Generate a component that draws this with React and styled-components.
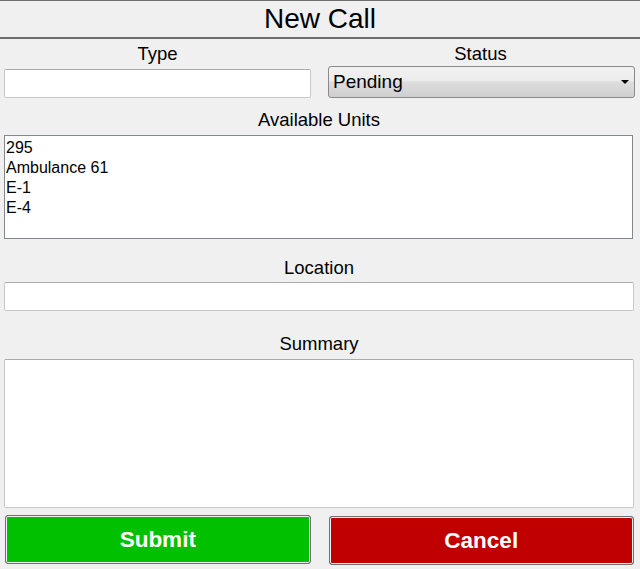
import React, { useState } from 'react';
import styled, { createGlobalStyle } from 'styled-components';

const GlobalStyle = createGlobalStyle`
  html, body {
    margin: 0;
    padding: 0;
    background: #f0f0f0;
    font-family: "Liberation Sans", Arial, sans-serif;
    color: #000;
  }
`;

const Window = styled.div`
  width: 640px;
  height: 569px;
  background: #f0f0f0;
  display: flex;
  flex-direction: column;
  overflow: hidden;
`;

const Header = styled.div`
  flex-shrink: 0;
  height: 36px;
  border-top: 1px solid #6d6d6d;
  border-bottom: 2px solid #6d6d6d;
  display: flex;
  align-items: center;
  justify-content: center;
  font-size: 28px;
`;

const Body = styled.div`
  flex-shrink: 0;
  display: flex;
  flex-direction: column;
  padding: 0 6px 0 4px;
`;

const Row = styled.div`
  display: flex;
  gap: 16px;
  align-items: flex-end;
`;

const Field = styled.div`
  flex: 1;
  flex-shrink: 0;
  display: flex;
  flex-direction: column;
  margin-top: ${(p) => p.top || 0}px;
`;

const Label = styled.div`
  text-align: center;
  font-size: 18.5px;
  line-height: 20px;
  margin-bottom: ${(p) => p.gap || 5}px;
`;

const TextInput = styled.input`
  box-sizing: border-box;
  height: 29px;
  border: 1px solid #c8c8c8;
  border-top-color: #ababab;
  border-radius: 2px;
  background: #fff;
  font: 16px "Liberation Sans", Arial, sans-serif;
  padding: 0 4px;
  outline: none;
`;

const SelectBox = styled.div`
  box-sizing: border-box;
  height: 32px;
  border: 1px solid #8a8a8a;
  border-radius: 3px;
  background: linear-gradient(#f2f2f2 0%, #ebebeb 45%, #dddddd 50%, #cfcfcf 100%);
  display: flex;
  align-items: center;
  justify-content: space-between;
  padding: 0 4px 0 4px;
  font-size: 19px;
  margin-left: 1px;
  margin-right: -1px;
`;

const Caret = styled.span`
  width: 0;
  height: 0;
  border-left: 4px solid transparent;
  border-right: 4px solid transparent;
  border-top: 4px solid #000;
  margin-right: 1px;
`;

const ListBox = styled.div`
  box-sizing: border-box;
  height: 104px;
  border: 1px solid #828790;
  background: #fff;
  padding: 2px 1px;
  font-size: 16px;
  line-height: 20px;
  margin-right: 1px;
`;

const ListItem = styled.div`
  padding-left: 0;
`;

const TextArea = styled.textarea`
  box-sizing: border-box;
  height: 149px;
  border: 1px solid #c8c8c8;
  border-top-color: #ababab;
  border-radius: 2px;
  background: #fff;
  resize: none;
  outline: none;
  font: 16px "Liberation Sans", Arial, sans-serif;
`;

const ButtonRow = styled.div`
  display: flex;
  gap: 18px;
  margin-top: 7px;
  padding-left: 1px;
`;

const ActionButton = styled.button`
  flex: 1;
  box-sizing: border-box;
  height: 49px;
  border: 1px solid #707070;
  border-radius: 3px;
  padding: 0;
  background: ${(p) => p.color};
  box-shadow: inset 0 0 0 1px #f0f0f0;
  color: #fff;
  font: bold 22.5px "Liberation Sans", Arial, sans-serif;
  margin-top: ${(p) => p.offset || 0}px;
  cursor: pointer;
`;

const units = ['295', 'Ambulance 61', 'E-1', 'E-4'];

const App = () => {
  const [type, setType] = useState('');
  const [location, setLocation] = useState('');
  const [summary, setSummary] = useState('');

  return (
    <Window>
      <GlobalStyle />
      <Header>New Call</Header>
      <Body>
        <Row>
          <Field top={5}>
            <Label gap={5}>Type</Label>
            <TextInput value={type} onChange={(e) => setType(e.target.value)} />
          </Field>
          <Field top={5}>
            <Label gap={2}>Status</Label>
            <SelectBox>
              Pending
              <Caret />
            </SelectBox>
          </Field>
        </Row>
        <Field top={12}>
          <Label gap={5}>Available Units</Label>
          <ListBox>
            {units.map((u) => (
              <ListItem key={u}>{u}</ListItem>
            ))}
          </ListBox>
        </Field>
        <Field top={19}>
          <Label gap={4}>Location</Label>
          <TextInput value={location} onChange={(e) => setLocation(e.target.value)} />
        </Field>
        <Field top={23}>
          <Label gap={5}>Summary</Label>
          <TextArea value={summary} onChange={(e) => setSummary(e.target.value)} />
        </Field>
        <ButtonRow>
          <ActionButton color="#00c000">Submit</ActionButton>
          <ActionButton color="#c00000" offset={1}>Cancel</ActionButton>
        </ButtonRow>
      </Body>
    </Window>
  );
};

export default App;
